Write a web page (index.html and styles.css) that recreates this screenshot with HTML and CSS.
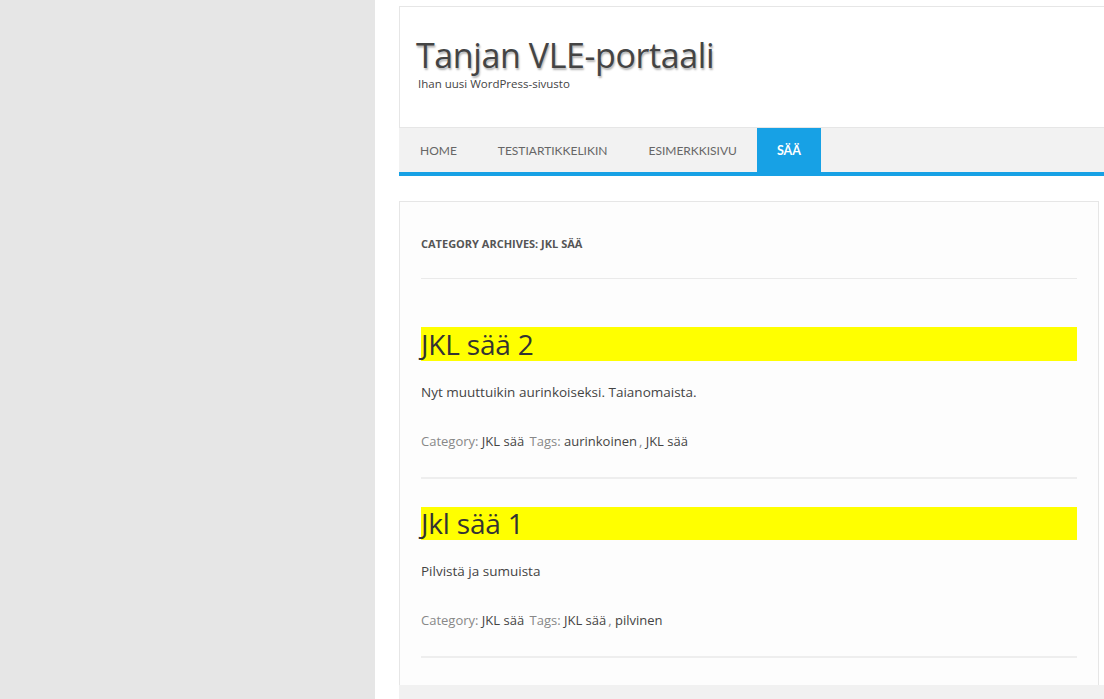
FILE: index.html
```html
<!DOCTYPE html>
<html lang="fi">
<head>
<meta charset="utf-8">
<title>Tanjan VLE-portaali</title>
<link rel="stylesheet" href="styles.css">
</head>
<body>
<div class="page">
  <aside class="side"></aside>
  <div class="main">
    <header class="header">
      <div class="brand">
        <h1 class="site-title">Tanjan VLE-portaali</h1>
        <p class="tagline">Ihan uusi WordPress-sivusto</p>
      </div>
      <nav class="nav">
        <a class="nav-item" href="#">Home</a>
        <a class="nav-item" href="#">Testiartikkelikin</a>
        <a class="nav-item" href="#">Esimerkkisivu</a>
        <a class="nav-item active" href="#">Sää</a>
      </nav>
    </header>
    <section class="content">
      <h2 class="archive-title">Category Archives: JKL sää</h2>
      <article class="post">
        <h3 class="post-title">JKL sää 2</h3>
        <p class="post-text">Nyt muuttuikin aurinkoiseksi. Taianomaista.</p>
        <p class="meta"><span class="label">Category:</span> <a href="#">JKL sää</a> <span class="label">Tags:</span> <a href="#">aurinkoinen</a>, <a href="#">JKL sää</a></p>
      </article>
      <article class="post">
        <h3 class="post-title">Jkl sää 1</h3>
        <p class="post-text">Pilvistä ja sumuista</p>
        <p class="meta"><span class="label">Category:</span> <a href="#">JKL sää</a> <span class="label">Tags:</span> <a href="#">JKL sää</a>, <a href="#">pilvinen</a></p>
      </article>
    </section>
    <div class="footer"></div>
  </div>
</div>
</body>
</html>
```
FILE: styles.css
```css
html, body {
  margin: 0;
  padding: 0;
  height: 100%;
  overflow: hidden;
}
body {
  font-family: "Open Sans", "Noto Sans", sans-serif;
  color: #444;
  background: #fff;
}
.page {
  display: flex;
  min-height: 100%;
}
.side {
  flex: 0 0 375px;
  background: #e6e6e6;
}
.main {
  flex: 0 0 760px;
  padding: 6px 0 0 24px;
  box-sizing: border-box;
}
.header {
  border-top: 1px solid #e6e6e6;
  border-left: 1px solid #e6e6e6;
  width: 736px;
}
.brand {
  height: 120px;
  padding: 26px 0 0 16px;
  box-sizing: border-box;
}
.site-title {
  margin: 0;
  font-size: 34px;
  font-weight: 400;
  line-height: 44px;
  color: #444;
  letter-spacing: -0.4px;
  text-shadow: 1px 2px 2px rgba(0,0,0,0.3);
}
.tagline {
  margin: 0 0 0 2px;
  font-size: 11.5px;
  line-height: 14px;
  color: #444;
}
.nav {
  display: flex;
  background: #f2f2f2;
  border-top: 1px solid #e6e6e6;
  border-bottom: 4px solid #17a1e5;
  height: 44px;
  margin-left: -1px;
  font-family: "Lato", "Open Sans", sans-serif;
}
.nav-item {
  display: flex;
  align-items: center;
  padding: 0 20px 0 21px;
  font-size: 12px;
  text-transform: uppercase;
  color: #666;
  text-decoration: none;
}
.nav-item.active {
  background: #17a1e5;
  color: #fff;
  font-weight: 700;
  font-size: 12.5px;
  padding: 0 20px;
}
.content {
  margin-top: 25px;
  width: 700px;
  box-sizing: border-box;
  border: 1px solid #e6e6e6;
  border-bottom: none;
  padding: 35px 21px 27px 21px;
  background: #fdfdfd;
}
.archive-title {
  margin: 0;
  font-size: 11px;
  font-weight: 700;
  text-transform: uppercase;
  color: #555;
  line-height: 14px;
  padding-bottom: 27px;
  border-bottom: 1px solid #eaeaea;
}
.post {
  border-bottom: 2px solid #eeeeee;
  padding-bottom: 26px;
}
.archive-title + .post {
  padding-top: 48px;
}
.post + .post {
  padding-top: 28px;
}
.post-title {
  margin: 0;
  background: #ffff00;
  font-size: 28px;
  font-weight: 400;
  line-height: 34px;
  color: #333;
  letter-spacing: -0.2px;
}
.post + .post .post-title {
  line-height: 33px;
}
.post-text {
  margin: 20px 0 0;
  font-size: 13.5px;
  line-height: 22px;
  color: #444;
}
.meta {
  margin: 28px 0 0;
  font-size: 13px;
  line-height: 20px;
  color: #888;
}
.meta a {
  color: #444;
  text-decoration: none;
  margin-right: 2px;
}
.footer {
  background: #f1f1f1;
  height: 40px;
  width: 736px;
}
```
